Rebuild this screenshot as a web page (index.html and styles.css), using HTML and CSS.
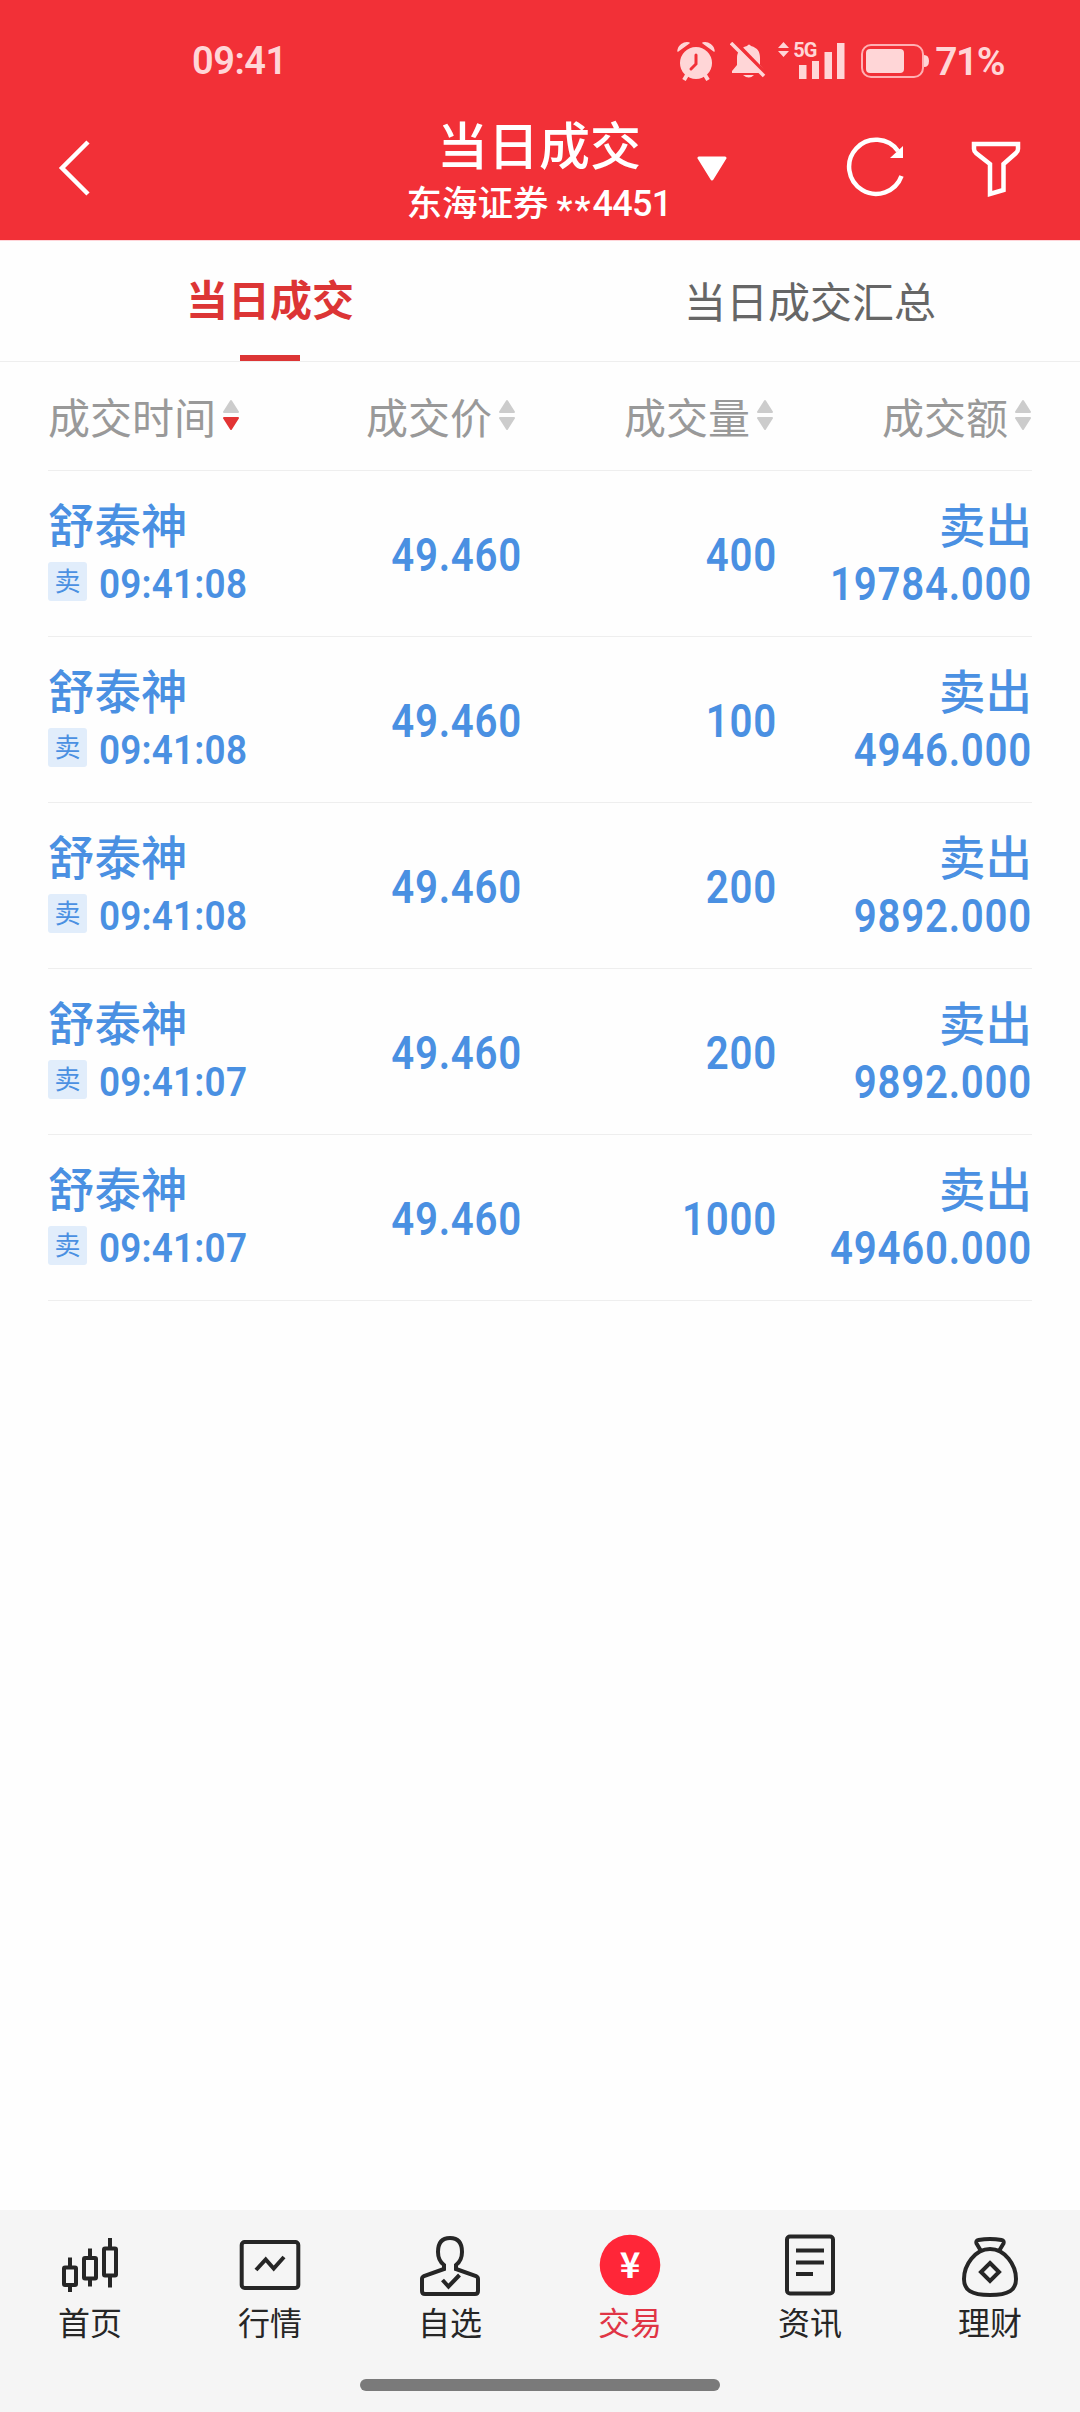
FILE: index.html
```html
<!DOCTYPE html>
<html lang="zh-CN">
<head>
    <meta charset="UTF-8">
    <meta name="viewport" content="width=device-width, initial-scale=1.0">
    <title>当日成交</title>
    <link rel="stylesheet" href="styles.css">
</head>
<body>
    <div class="header">
        <div class="status-bar">
            <span class="clock">09:41</span>
            <div class="status-icons">
                <svg class="alarm" width="38" height="40" viewBox="0 0 38 40">
                    <path d="M1 10A9 9 0 0 1 12 2ZM37 10A9 9 0 0 0 26 2Z" stroke="#ffd6d7" stroke-width="1.5" stroke-linejoin="round"/>
                    <circle cx="19" cy="22" r="16"/>
                    <path d="M10 34L7 39M28 34l3 5" stroke="#ffd6d7" stroke-width="4"/>
                    <path d="M19 14v9l-5 5" fill="none" stroke="#f23037" stroke-width="3" stroke-linecap="round"/>
                </svg>
                <svg class="bell" width="38" height="38" viewBox="0 0 38 38">
                    <path d="M17 4q2-3 4 0c7 2 9 6 9 12v7l5 6v2H2v-2l5-6v-7c0-6 3-10 10-12zM13 33h11q-5 5-11 0z"/>
                    <path d="M3 -2l37 38" stroke="#f23037" stroke-width="4"/>
                    <path d="M1 1l33 33" stroke="#ffd6d7" stroke-width="3.5"/>
                </svg>
                <div class="signal">
                    <svg width="68" height="38" viewBox="0 0 68 38">
                        <path d="M0 6l5.500-6L11 6zM0 9h11l-5.500 6zM21 23h7.500v14H21zM34 19h7v18h-7zM46.500 10h7.500v27h-7.500zM59 1h7.500v36H59z"/>
                    </svg>
                    <span class="net">5G</span>
                </div>
                <svg class="battery" width="68" height="36" viewBox="0 0 68 36">
                    <rect x="1" y="2" width="61" height="32" rx="9" fill="none" stroke="#ffb0b3" stroke-width="2"/>
                    <rect x="5" y="6" width="38" height="24" rx="4"/>
                    <path d="M63 12q5 0 5 6t-5 6z"/>
                </svg>
                <span class="percent">71%</span>
            </div>
        </div>
        <div class="nav-bar">
            <svg class="back" width="40" height="64" viewBox="0 0 40 64">
                <path d="M32 6L6 32l26 26"/>
            </svg>
            <div class="title">
                <h1>当日成交</h1>
                <div class="account">东海证券 <span class="mask">**</span><span class="tail">4451</span></div>
            </div>
            <svg class="dropdown" width="30" height="25" viewBox="0 0 30 25">
                <path d="M2 2h26L15 23z"/>
            </svg>
            <div class="actions">
                <svg width="64" height="64" viewBox="0 0 64 64">
                    <path d="M56.500 39A27 27 0 1 1 53 14" class="line"/>
                    <path d="M58 9v12H45z" class="solid"/>
                </svg>
                <svg width="56" height="64" viewBox="0 0 56 64">
                    <path d="M6 7h44v5q0 2-2 4L35.500 27v26L22 57V27L8 16q-2-2-2-4z" class="line"/>
                </svg>
            </div>
        </div>
    </div>

    <div class="tabs">
        <div class="tab active">当日成交</div>
        <div class="tab">当日成交汇总</div>
    </div>

    <div class="deals">
        <div class="columns">
            <div class="col sorted">成交时间<svg width="16" height="32" viewBox="0 0 16 32"><path class="up" d="M1 13L8 2l7 11z"/><path class="down" d="M1 19h14L8 30z"/></svg></div>
            <div class="col price">成交价<svg width="16" height="32" viewBox="0 0 16 32"><path class="up" d="M1 13L8 2l7 11z"/><path class="down" d="M1 19h14L8 30z"/></svg></div>
            <div class="col amount">成交量<svg width="16" height="32" viewBox="0 0 16 32"><path class="up" d="M1 13L8 2l7 11z"/><path class="down" d="M1 19h14L8 30z"/></svg></div>
            <div class="col total">成交额<svg width="16" height="32" viewBox="0 0 16 32"><path class="up" d="M1 13L8 2l7 11z"/><path class="down" d="M1 19h14L8 30z"/></svg></div>
        </div>

        <div class="deal">
            <div>
                <div class="name">舒泰神</div>
                <div class="time"><span class="badge">卖</span><span class="clock-time">09:41:08</span></div>
            </div>
            <div class="num">49.460</div>
            <div class="num">400</div>
            <div class="right">
                <div class="name">卖出</div>
                <div class="sum">19784.000</div>
            </div>
        </div>
        <div class="deal">
            <div>
                <div class="name">舒泰神</div>
                <div class="time"><span class="badge">卖</span><span class="clock-time">09:41:08</span></div>
            </div>
            <div class="num">49.460</div>
            <div class="num">100</div>
            <div class="right">
                <div class="name">卖出</div>
                <div class="sum">4946.000</div>
            </div>
        </div>
        <div class="deal">
            <div>
                <div class="name">舒泰神</div>
                <div class="time"><span class="badge">卖</span><span class="clock-time">09:41:08</span></div>
            </div>
            <div class="num">49.460</div>
            <div class="num">200</div>
            <div class="right">
                <div class="name">卖出</div>
                <div class="sum">9892.000</div>
            </div>
        </div>
        <div class="deal">
            <div>
                <div class="name">舒泰神</div>
                <div class="time"><span class="badge">卖</span><span class="clock-time">09:41:07</span></div>
            </div>
            <div class="num">49.460</div>
            <div class="num">200</div>
            <div class="right">
                <div class="name">卖出</div>
                <div class="sum">9892.000</div>
            </div>
        </div>
        <div class="deal">
            <div>
                <div class="name">舒泰神</div>
                <div class="time"><span class="badge">卖</span><span class="clock-time">09:41:07</span></div>
            </div>
            <div class="num">49.460</div>
            <div class="num">1000</div>
            <div class="right">
                <div class="name">卖出</div>
                <div class="sum">49460.000</div>
            </div>
        </div>
    </div>

    <div class="footer">
        <div class="menu">
            <div class="item">
                <svg width="72" height="72" viewBox="0 0 72 72">
                    <rect x="10" y="39.500" width="12" height="17.500" rx="1"/>
                    <rect x="30" y="30" width="12" height="20.500" rx="1"/>
                    <rect x="50" y="20.500" width="12" height="27" rx="1"/>
                    <path d="M16 29.500v10M16 57v7M36 20.500v10M36 50v8.500M56 10v10M56 48v11.500"/>
                </svg>
                首页
            </div>
            <div class="item">
                <svg width="72" height="72" viewBox="0 0 72 72">
                    <rect x="7.700" y="14" width="56.600" height="46" rx="3"/>
                    <path d="M22 42l9.700-10.500 8 9L50 29"/>
                </svg>
                行情
            </div>
            <div class="item">
                <svg width="72" height="72" viewBox="0 0 72 72">
                    <path d="M30 41v-4c-4-3-6-7-6-13 0-9 4-14 12-14s12 5 12 14c0 6-2 10-6 13v4l20 7q2 1 2 3v12q0 3-3 3H11q-3 0-3-3V51q0-2 2-3z"/>
                    <path d="M28.500 52l6 6.500L45.500 47"/>
                </svg>
                自选
            </div>
            <div class="item active">
                <svg width="72" height="72" viewBox="0 0 72 72">
                    <circle cx="36" cy="37" r="30.300"/>
                    <text x="36" y="50" text-anchor="middle">¥</text>
                </svg>
                交易
            </div>
            <div class="item">
                <svg width="72" height="72" viewBox="0 0 72 72">
                    <rect x="13" y="8.500" width="46" height="57" rx="3"/>
                    <path d="M22 22.500h28M22 34.500h28M22 46h17"/>
                </svg>
                资讯
            </div>
            <div class="item">
                <svg width="72" height="72" viewBox="0 0 72 72">
                    <path d="M36 21c15 0 26 16 26 30 0 11-7 16-26 16s-26-5-26-16c0-14 11-30 26-30z"/>
                    <path d="M27 23l-4.500-7.500q-1-3 2-3.500 11.500-2 23 0 3 .5 2 3.500L45 23M36 35l9 9-9 9-9-9z"/>
                </svg>
                理财
            </div>
        </div>
        <div class="home-bar"></div>
    </div>
</body>
</html>
```
FILE: styles.css
```css
* {
    box-sizing: border-box;
}
body {
    margin: 0;
    width: 1080px;
    height: 2412px;
    display: flex;
    flex-direction: column;
    background: #fefefe;
    font-family: "Noto Sans CJK SC", "Noto Sans", sans-serif;
    overflow: hidden;
}
svg {
    display: block;
    flex: none;
}

/* header */
.header {
    height: 241px;
    background: #f23037;
    border-bottom: 1px solid #ffd5d9;
    color: #fff;
}
.status-bar {
    height: 88px;
    padding: 34px 76px 0 192px;
    display: flex;
    justify-content: space-between;
    align-items: flex-start;
    color: #ffd6d7;
    fill: #ffd6d7;
    font-family: Roboto, sans-serif;
    font-weight: 600;
    font-size: 38px;
    line-height: 54px;
}
.clock {
    letter-spacing: -0.5px;
}
.status-icons {
    display: flex;
    height: 54px;
    align-items: center;
}
.bell {
    margin-left: 15px;
}
.signal {
    position: relative;
    margin-left: 10px;
}
.net {
    position: absolute;
    left: 15px;
    top: -3px;
    font-size: 20px;
    line-height: 22px;
    font-weight: 700;
    letter-spacing: -1px;
}
.battery {
    margin-left: 15px;
    margin-right: 6px;
}
.percent {
    padding-top: 2px;
    font-size: 39px;
    letter-spacing: -1.5px;
    line-height: 54px;
}
.nav-bar {
    display: grid;
    grid-template-columns: 400px 278px 68px 1fr;
    height: 152px;
}
.back {
    margin: 48px 0 0 56px;
    fill: none;
    stroke: #fff;
    stroke-width: 4.5;
}
.title {
    padding-top: 25px;
    text-align: center;
}
h1 {
    margin: 0;
    font-size: 51px;
    line-height: 60px;
    font-weight: 500;
}
.account {
    margin-top: 6px;
    font-size: 35.5px;
    line-height: 44px;
    font-weight: 500;
    white-space: nowrap;
}
.mask, .tail {
    font-family: Roboto, sans-serif;
    font-size: 36px;
    letter-spacing: -0.7px;
}
.mask {
    letter-spacing: 2px;
    line-height: 1;
    vertical-align: -6px;
}
.dropdown {
    margin: 68px auto 0;
    fill: #fff;
    stroke: #fff;
    stroke-width: 3;
    stroke-linejoin: round;
}
.actions {
    display: flex;
    gap: 59px;
    padding: 49px 0 0 99px;
}
.actions .line {
    fill: none;
    stroke: #fff;
    stroke-width: 4.5;
}
.actions .solid {
    fill: #fff;
}

/* tabs */
.tabs {
    display: flex;
    height: 121px;
    border-bottom: 1px solid #eee;
}
.tab {
    flex: 1;
    display: flex;
    flex-direction: column;
    align-items: center;
    font-size: 42px;
    line-height: 118px;
    color: #666;
}
.tab.active {
    color: #dc3535;
    font-weight: 600;
    line-height: 114px;
}
.tab.active::after {
    content: "";
    width: 60px;
    height: 6px;
    background: #dc3535;
}

/* deals list */
.deals {
    flex: 1;
    padding: 0 48px;
}
.columns, .deal {
    display: grid;
    grid-template-columns: 212px 262px 255px 255px;
    border-bottom: 1px solid #eee;
}
.columns {
    height: 109px;
    padding-bottom: 2px;
    color: #999;
    font-size: 42px;
}
.col {
    display: flex;
    align-items: center;
    justify-content: flex-end;
    gap: 7px;
}
.col.sorted {
    justify-content: flex-start;
}
.col.price {
    padding-right: 7px;
}
.col.amount {
    padding-right: 4px;
}
.col.total {
    padding-right: 1px;
}
.col path {
    fill: #ccc;
    stroke: #ccc;
    stroke-width: 2;
    stroke-linejoin: round;
}
.col.sorted .down {
    fill: #e33434;
    stroke: #e33434;
}
.deal {
    height: 166px;
    padding-top: 24px;
    color: #4a90e2;
    font-weight: 500;
}
.name {
    font-size: 46.5px;
    line-height: 56px;
}
.time {
    display: flex;
    align-items: center;
    margin-top: 12px;
    height: 40px;
}
.clock-time {
    flex: none;
    font-family: Roboto, sans-serif;
    font-size: 41.5px;
    font-weight: 600;
    letter-spacing: 0.2px;
    transform: scaleX(0.89);
    transform-origin: left;
}
.badge {
    flex: none;
    width: 39px;
    height: 39px;
    margin: -3px 12px 0 0;
    border-radius: 3px;
    background: #e1edfb;
    font-size: 26px;
    font-weight: 400;
    line-height: 36px;
    text-align: center;
}
.num, .sum {
    font-family: Roboto, sans-serif;
    font-size: 47px;
    font-weight: 600;
    letter-spacing: 0.9px;
    text-align: right;
    transform: scaleX(0.855);
    transform-origin: right;
}
.num {
    line-height: 120px;
}
.right {
    text-align: right;
}
.sum {
    margin-top: 12px;
    line-height: 42px;
}

/* bottom menu */
.footer {
    height: 202px;
    background: #f5f5f5;
}
.menu {
    display: flex;
    height: 169px;
    padding-top: 18px;
}
.item {
    flex: 1;
    display: flex;
    flex-direction: column;
    align-items: center;
    font-size: 32px;
    line-height: 42px;
    color: #262626;
}
.item svg {
    fill: none;
    stroke: #262626;
    stroke-width: 4;
}
.item.active {
    color: #e03545;
}
.item.active circle {
    fill: #ff2638;
    stroke: none;
}
.item.active text {
    fill: #fff;
    stroke: none;
    font-size: 35px;
    font-weight: 700;
}
.home-bar {
    width: 360px;
    height: 12px;
    margin: 0 auto;
    border-radius: 6px;
    background: #7a7a7a;
}
```
